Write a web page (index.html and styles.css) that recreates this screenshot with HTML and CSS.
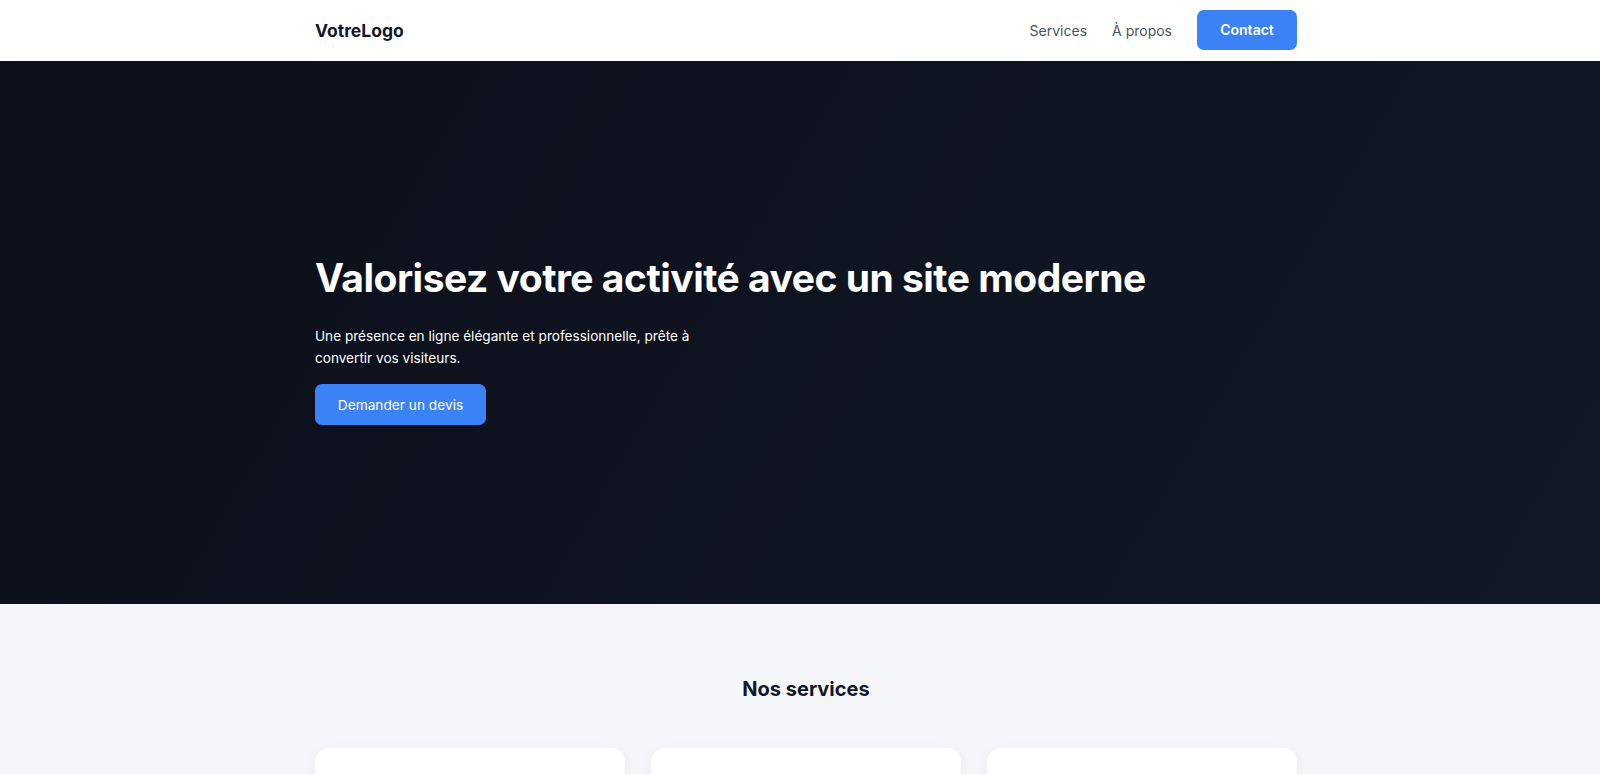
FILE: index.html
```html
<!DOCTYPE html>
<html lang="fr">
<head>
    <meta charset="UTF-8">
    <meta name="viewport" content="width=device-width, initial-scale=1.0">
    <title>VotreLogo - Site moderne</title>
    <link rel="stylesheet" href="styles.css">
</head>
<body>
    <header class="site-header">
        <div class="container nav-row">
            <a href="#" class="logo">VotreLogo</a>
            <nav class="nav-links">
                <a href="#services">Services</a>
                <a href="#apropos">À propos</a>
                <a href="#contact" class="btn btn-nav">Contact</a>
            </nav>
        </div>
    </header>

    <section class="hero">
        <div class="container">
            <h1>Valorisez votre activité avec un site moderne</h1>
            <p>Une présence en ligne élégante et professionnelle, prête à convertir vos visiteurs.</p>
            <a href="#contact" class="btn btn-hero">Demander un devis</a>
        </div>
    </section>

    <section class="services" id="services">
        <div class="container">
            <h2>Nos services</h2>
            <div class="cards">
                <div class="card">
                    <h3>Création de site</h3>
                    <p>Un site sur mesure, rapide et adapté à tous les écrans.</p>
                </div>
                <div class="card">
                    <h3>Référencement</h3>
                    <p>Soyez visible sur Google et attirez de nouveaux clients.</p>
                </div>
                <div class="card">
                    <h3>Maintenance</h3>
                    <p>Mises à jour, sauvegardes et support au quotidien.</p>
                </div>
            </div>
        </div>
    </section>
</body>
</html>
```

FILE: styles.css
```css
* {
    box-sizing: border-box;
}

body {
    margin: 0;
    font-family: Inter, "Noto Sans", sans-serif;
    color: #111827;
    background: #f5f6fa;
}

a {
    text-decoration: none;
}

.container {
    max-width: 994px;
    margin: 0 auto;
    padding-left: 12px;
}

/* header */
.site-header {
    background: #fff;
    height: 61px;
    box-shadow: 0 1px 2px rgba(0, 0, 0, 0.08);
    position: relative;
    z-index: 2;
}

.nav-row {
    height: 100%;
    display: flex;
    align-items: center;
    justify-content: space-between;
}

.logo {
    font-size: 17.5px;
    font-weight: 700;
    color: #111827;
}

.nav-links {
    display: flex;
    align-items: center;
    gap: 25px;
}

.nav-links a {
    font-size: 14px;
    color: #4b5563;
}

.btn {
    display: inline-flex;
    align-items: center;
    justify-content: center;
    background: #3b82f6;
    color: #fff;
    border-radius: 7px;
}

.nav-links .btn-nav {
    width: 100px;
    height: 40px;
    margin-top: -2px;
    color: #fff;
    font-weight: 600;
}

/* hero */
.hero {
    min-height: 543px;
    display: flex;
    align-items: center;
    background: linear-gradient(120deg, #0b0f19 0%, #0f1421 55%, #111827 100%);
    color: #fff;
}

.hero .container {
    width: 100%;
    padding-top: 14px;
}

.hero h1 {
    font-size: 39px;
    font-weight: 700;
    letter-spacing: -0.5px;
    margin: 0 0 24px;
}

.hero p {
    font-size: 13.6px;
    line-height: 22px;
    max-width: 400px;
    margin: 0 0 15px;
}

.btn-hero {
    width: 171px;
    height: 41px;
    font-size: 13.7px;
}

/* services */
.services {
    padding-top: 73px;
}

.services h2 {
    text-align: center;
    font-size: 20px;
    font-weight: 700;
    margin: 0 0 47px;
}

.cards {
    display: grid;
    grid-template-columns: repeat(3, 1fr);
    gap: 26px;
}

.card {
    background: #fff;
    border-radius: 14px;
    padding: 36px 28px;
    min-height: 180px;
    box-shadow: 0 4px 14px rgba(17, 24, 39, 0.05);
}

.card h3 {
    margin: 0 0 10px;
    font-size: 18px;
}

.card p {
    margin: 0;
    color: #4b5563;
    font-size: 15px;
    line-height: 1.6;
}
```
